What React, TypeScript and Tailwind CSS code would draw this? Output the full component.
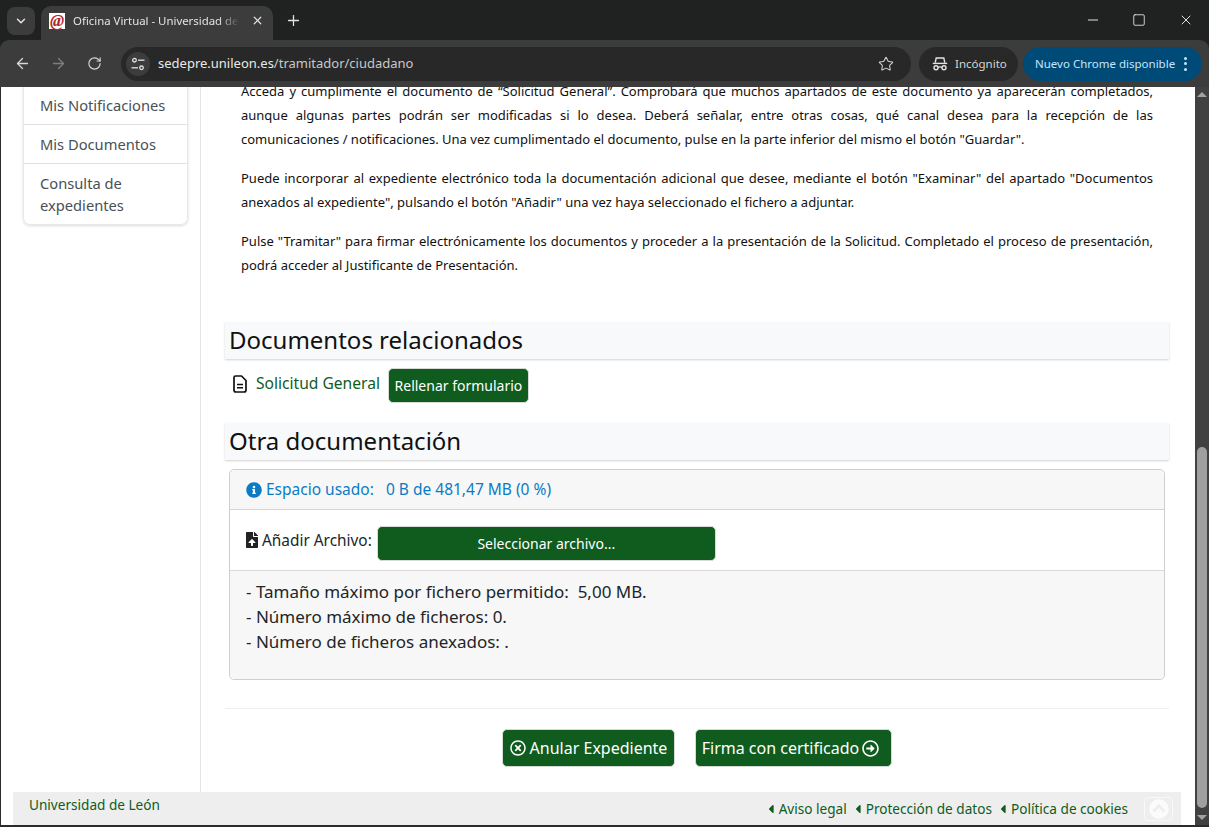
import { ArrowLeft, ArrowRight, ChevronDown, Minus, Plus, RotateCw, Square, Star, X } from "lucide-react";
import {
  FaCaretLeft,
  FaChevronCircleUp,
  FaFileUpload,
  FaInfoCircle,
  FaRegArrowAltCircleRight,
  FaRegTimesCircle,
} from "react-icons/fa";

const page = "font-['Noto_Sans','Open_Sans',sans-serif]";
const chrome = "font-['Noto_Sans','Open_Sans',sans-serif]";

function TuneIcon() {
  return (
    <svg width="14" height="14" viewBox="0 0 14 14" fill="none" stroke="#dfe1e5" strokeWidth="1.3">
      <circle cx="3.5" cy="3.2" r="1.8" />
      <path d="M7 3.2h6.5" />
      <circle cx="10.5" cy="10.8" r="1.8" />
      <path d="M0.5 10.8H7" />
    </svg>
  );
}

function IncognitoIcon() {
  return (
    <svg width="16" height="16" viewBox="0 0 16 16" fill="none" stroke="#e3e3e3" strokeWidth="1.4">
      <path d="M3.2 6.6 4.2 2h7.6l1 4.6" />
      <path d="M0.8 7.4h14.4" />
      <circle cx="4" cy="11.8" r="2" />
      <circle cx="12" cy="11.8" r="2" />
      <path d="M6 11.4c1.2-.6 2.8-.6 4 0" />
    </svg>
  );
}

function FileIcon() {
  return (
    <svg width="14" height="18" viewBox="0 0 14 18" fill="none" stroke="#111" strokeWidth="1.7" strokeLinejoin="round" className="-mt-[3px]">
      <path d="M2.5 1h6L13 5.5V15a2 2 0 0 1-2 2H3a2 2 0 0 1-2-2V2.5A1.5 1.5 0 0 1 2.5 1z" />
      <path d="M4 9.5h6M4 12.8h6" strokeWidth="1.5" />
    </svg>
  );
}

function BrowserBar() {
  return (
    <div className={`${chrome} shrink-0 bg-[#202221] text-[#e3e3e3]`}>
      <div className="flex h-10 items-end pl-[7px]">
        <div className="mb-[5px] flex h-7 w-7 items-center justify-center self-end rounded-lg bg-[#3c3c3c]">
          <ChevronDown size={14} strokeWidth={2.5} />
        </div>
        <div className="ml-[6px] flex h-[34px] w-[232px] items-center rounded-t-[10px] bg-[#3c3c3c] pb-[5px] pl-[8px] pr-[9px]">
          <div className="flex h-4 w-4 items-center justify-center bg-white font-['Liberation_Serif',serif] text-[17px] font-bold italic leading-none text-[#b3262e]">
            @
          </div>
          <span className="ml-[8px] w-[166px] overflow-hidden whitespace-nowrap text-[11.4px] text-[#e3e3e3] [mask-image:linear-gradient(to_right,black_88%,transparent)]">
            Oficina Virtual - Universidad de León
          </span>
          <X size={13} strokeWidth={2.2} className="ml-auto" />
        </div>
        <div className="mb-[10px] ml-[10px] flex h-5 w-5 items-center justify-center">
          <Plus size={17} strokeWidth={1.8} />
        </div>
        <div className="ml-auto flex h-10 items-center self-start text-[#f0f0f0]">
          <div className="flex w-[46px] justify-center">
            <Minus size={16} strokeWidth={1.4} />
          </div>
          <div className="flex w-[46px] justify-center">
            <Square size={14} strokeWidth={1.4} />
          </div>
          <div className="flex w-[47px] justify-center">
            <X size={16} strokeWidth={1.4} />
          </div>
        </div>
      </div>
      <div className="flex h-[47px] items-center rounded-t-[9px] bg-[#3c3c3c] pl-[14px] pr-[3px]">
        <ArrowLeft size={17} strokeWidth={1.8} className="text-[#d7d7d7]" />
        <ArrowRight size={17} strokeWidth={1.8} className="ml-[19px] text-[#7f7f7f]" />
        <RotateCw size={15} strokeWidth={1.8} className="ml-[20px] text-[#d7d7d7]" />
        <div className="ml-[19px] flex h-[34px] w-[790px] items-center rounded-full bg-[#282828] pl-[5px] pr-[17px]">
          <div className="flex h-6 w-6 items-center justify-center rounded-full bg-[#3c3c3c]">
            <TuneIcon />
          </div>
          <span className="ml-[8px] text-[13px] text-[#c8c8c8]">
            <span className="text-[#e8e8e8]">sedepre.unileon.es</span>/tramitador/ciudadano
          </span>
          <Star size={16} strokeWidth={1.6} className="ml-auto text-[#d0d0d0]" />
        </div>
        <div className="ml-[8px] flex h-[34px] w-[99px] items-center rounded-full bg-[#282828] pl-[13px]">
          <IncognitoIcon />
          <span className="ml-[7px] text-[11.5px] text-[#d5d5d5]">Incógnito</span>
        </div>
        <div className="ml-[5px] flex h-[34px] w-[179px] items-center rounded-full bg-[#004a77] pl-[12px]">
          <span className="whitespace-nowrap text-[11.5px] text-[#c2e7ff]">Nuevo Chrome disponible</span>
          <span className="ml-[9px] flex flex-col gap-[2.5px]">
            <i className="h-[3px] w-[3px] rounded-full bg-[#c2e7ff]" />
            <i className="h-[3px] w-[3px] rounded-full bg-[#c2e7ff]" />
            <i className="h-[3px] w-[3px] rounded-full bg-[#c2e7ff]" />
          </span>
        </div>
      </div>
    </div>
  );
}

function Sidebar() {
  const item = "border-t border-[#dfe0e4] px-4 text-[14.7px] leading-[22px] text-[#495057]";
  return (
    <aside className="w-[200px] shrink-0 border-r border-[#e4e5e8] pl-[22px] pr-[12px]">
      <div className="rounded-b-[7px] border-x border-b border-[#e8e8ea] shadow-[0_1px_3px_rgba(0,0,0,0.14)]">
        <div className="px-4 pb-[8px] pt-[7px] text-[14.7px] leading-[22px] text-[#495057]">Mis Notificaciones</div>
        <div className={`${item} py-[8px]`}>Mis Documentos</div>
        <div className={`${item} pb-[8px] pt-[8px]`}>Consulta de expedientes</div>
      </div>
    </aside>
  );
}

function Heading({ children }: { children: string }) {
  return (
    <h2 className="h-[37px] bg-[#f8f9fa] pl-1 text-[24px] leading-[35px] text-[#111] shadow-[0_1px_2px_rgba(0,0,0,0.18)]">
      {children}
    </h2>
  );
}

function GreenButton({ children, className }: { children: React.ReactNode; className: string }) {
  return (
    <button className={`flex items-center justify-center rounded-[5px] border border-[#d5dcd5] bg-[#0f5c1e] text-white ${className}`}>
      {children}
    </button>
  );
}

function FooterLink({ children }: { children: string }) {
  return (
    <span className="mt-[1px] flex items-center text-[13.6px] text-[#0f5c1e]">
      <FaCaretLeft size={14} className="mr-[1px]" />
      {children}
    </span>
  );
}

function Main() {
  const para = "text-justify text-[13px] leading-[23.6px] text-[#111]";
  return (
    <main className="min-w-0 flex-1">
      <div className="-mt-[6.6px] pl-[40px] pr-[42px]">
        <p className={para}>
          Acceda y cumplimente el documento de “Solicitud General”. Comprobará que muchos apartados de este documento ya aparecerán completados, aunque algunas partes podrán ser modificadas si lo desea. Deberá señalar, entre otras cosas, qué canal desea para la recepción de las comunicaciones / notificaciones. Una vez cumplimentado el documento, pulse en la parte inferior del mismo el botón "Guardar".
        </p>
        <p className={`${para} mt-[15.8px]`}>
          Puede incorporar al expediente electrónico toda la documentación adicional que desee, mediante el botón "Examinar" del apartado "Documentos anexados al expediente", pulsando el botón "Añadir" una vez haya seleccionado el fichero a adjuntar.
        </p>
        <p className={`${para} mt-[15.8px]`}>
          Pulse "Tramitar" para firmar electrónicamente los documentos y proceder a la presentación de la Solicitud. Completado el proceso de presentación, podrá acceder al Justificante de Presentación.
        </p>
      </div>

      <div className="ml-[24px] mr-[26px] mt-[45px]">
        <Heading>Documentos relacionados</Heading>
        <div className="ml-[8px] mt-[9px] flex items-center">
          <FileIcon />
          <span className="ml-[9px] -mt-[3px] text-[15.6px] text-[#0f5c1e]">Solicitud General</span>
          <GreenButton className="ml-[8px] h-[35px] w-[141px] text-[14px]">Rellenar formulario</GreenButton>
        </div>

        <div className="mt-[20px]">
          <Heading>Otra documentación</Heading>
        </div>

        <div className="ml-1 mr-1 mt-[9px] h-[211px] rounded-[5px] border border-[#cfcfcf]">
          <div className="flex h-[40px] items-center rounded-t-[5px] border-b border-[#d4d4d4] bg-[#f7f7f7] pl-4 text-[15.5px] text-[#0b7bc4]">
            <FaInfoCircle size={16} />
            <span className="ml-1 whitespace-pre">Espacio usado:   0 B de 481,47 MB (0 %)</span>
          </div>
          <div className="flex h-[61px] items-center border-b border-[#d9d9d9] pl-[14px] text-[15.4px] text-[#212529]">
            <FaFileUpload size={16} className="text-[#222]" />
            <span className="ml-[2px] mt-[1px]">Añadir Archivo:</span>
            <GreenButton className="ml-[5px] mt-[6px] h-[35px] w-[339px] text-[14px]">Seleccionar archivo...</GreenButton>
          </div>
          <div className="h-[108px] rounded-b-[5px] bg-[#f7f7f7] pl-4 pt-[8px] text-[17px] leading-[25px] text-[#212529]">
            <div className="whitespace-pre">- Tamaño máximo por fichero permitido:  5,00 MB.</div>
            <div>- Número máximo de ficheros: 0.</div>
            <div>- Número de ficheros anexados: .</div>
          </div>
        </div>

        <div className="mt-[28px] border-t border-[#eeeeee] pt-[20px]">
          <div className="flex justify-center gap-5">
            <GreenButton className="h-[38px] w-[173px] text-[16px]">
              <FaRegTimesCircle size={16} className="mr-1" />
              Anular Expediente
            </GreenButton>
            <GreenButton className="h-[38px] w-[197px] pr-[6px] text-[16px]">
              Firma con certificado
              <FaRegArrowAltCircleRight size={17} className="ml-[3px]" />
            </GreenButton>
          </div>
        </div>
      </div>
    </main>
  );
}

function Footer() {
  return (
    <footer className="ml-3 mr-[14px] flex h-[33px] shrink-0 items-center bg-[#eeeeee] pl-4 pr-[8px]">
      <span className="-mt-[6px] text-[13.6px] text-[#0f5c1e]">Universidad de León</span>
      <div className="ml-auto flex items-center gap-1">
        <FooterLink>Aviso legal</FooterLink>
        <FooterLink>Protección de datos</FooterLink>
        <FooterLink>Política de cookies</FooterLink>
        <div className="ml-3 flex h-[24px] w-[29px] items-center justify-center rounded-[4px] border border-[#f8f8f8]">
          <FaChevronCircleUp size={20} className="text-[#fbfbfb]" />
        </div>
      </div>
    </footer>
  );
}

function Scrollbar() {
  return (
    <div className="flex w-[14px] shrink-0 flex-col items-center bg-[#414141] pb-[1px]">
      <div className="mt-[5px] h-0 w-0 border-x-[5px] border-b-[5px] border-x-transparent border-b-[#a3a3a3]" />
      <div className="mt-[350px] h-[361px] w-[10px] rounded-full bg-[#9f9f9f]" />
      <div className="mt-auto mb-[4px] h-0 w-0 border-x-[5px] border-t-[5px] border-x-transparent border-t-[#a3a3a3]" />
    </div>
  );
}

export default function App() {
  return (
    <div className="flex h-[827px] w-[1209px] flex-col overflow-hidden bg-[#2b2b2b]">
      <BrowserBar />
      <div className="flex min-h-0 flex-1 pb-[2px] pl-[1px]">
        <div className={`${page} flex min-w-0 flex-1 flex-col overflow-hidden bg-white`}>
          <div className="flex min-h-0 flex-1">
            <Sidebar />
            <Main />
          </div>
          <Footer />
        </div>
        <Scrollbar />
      </div>
    </div>
  );
}
